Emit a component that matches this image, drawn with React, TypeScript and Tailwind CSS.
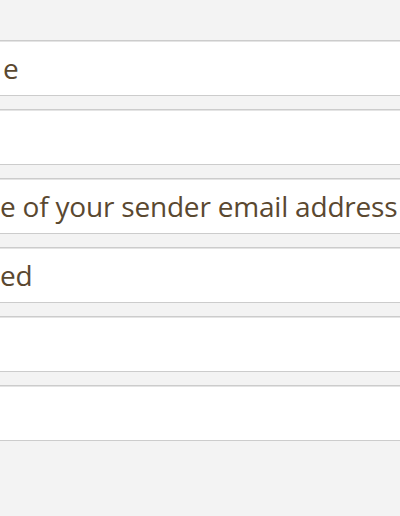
const rows = [
  { text: 'e', pad: 'pl-[3px]' },
  { text: '', pad: 'pl-0' },
  { text: 'e of your sender email address', pad: 'pl-0' },
  { text: 'ed', pad: 'pl-0' },
  { text: '', pad: 'pl-0' },
  { text: '', pad: 'pl-0' },
];

export default function App() {
  return (
    <div className="min-h-[516px] w-[400px] overflow-hidden bg-[#f3f3f3] pt-[40px] font-['Open_Sans',sans-serif]">
      <div className="flex flex-col gap-[13px]">
        {rows.map((row, i) => (
          <div
            key={i}
            className={`flex h-[56px] items-center whitespace-nowrap border-y border-[#cccccc] bg-white text-[28px] tracking-[-0.2px] text-[#5a4830] shadow-[inset_0_1px_0_#e4e4e4] ${row.pad}`}
          >
            {row.text}
          </div>
        ))}
      </div>
    </div>
  );
}
